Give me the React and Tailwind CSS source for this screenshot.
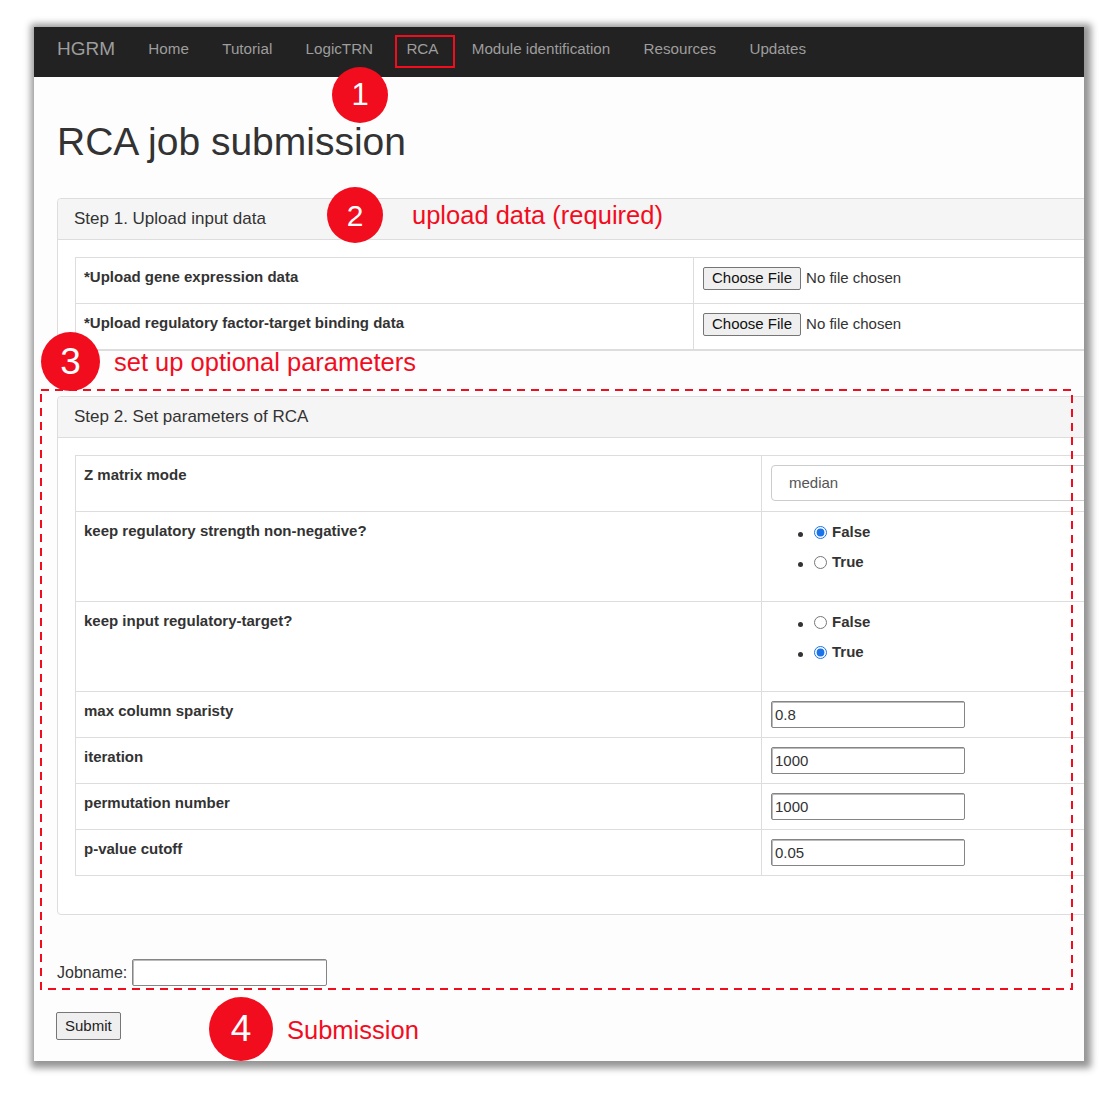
const RED = 'text-[#f20d1e]';

const NAV = ['Home', 'Tutorial', 'LogicTRN', 'RCA', 'Module identification', 'Resources', 'Updates'];

const FileCell = () => (
    <div className="flex items-center">
        <span className="flex h-[23px] items-center rounded-[2px] border border-[#767676] bg-[#efefef] px-[8px] text-[15px] text-[#111]">
            Choose File
        </span>
        <span className="ml-[5px] text-[15px] text-[#333]">No file chosen</span>
    </div>
);

const RadioList = ({ name, checked }) => (
    <ul className="list-disc pl-[43px] marker:text-[#333]">
        {['False', 'True'].map((v) => (
            <li key={v} className="h-[30px] leading-[26px]">
                <label className="inline-flex items-center font-bold text-[15px] text-[#333]">
                    <input
                        type="radio"
                        name={name}
                        defaultChecked={v === checked}
                        className="m-0 mr-[5px] h-[13px] w-[13px] accent-[#1a73e8]"
                    />
                    {v}
                </label>
            </li>
        ))}
    </ul>
);

const TextBox = ({ value, w = 'w-[194px]' }) => (
    <input
        type="text"
        defaultValue={value}
        className={`${w} h-[27px] rounded-[2px] border border-[#858585] bg-white px-[3px] text-[15px] text-[#333] shadow-[inset_1px_1px_0_#bbb] outline-none`}
    />
);

const Panel = ({ title, children, className = '' }) => (
    <div className={`w-[1400px] rounded-[4px] border border-[#ddd] bg-white ${className}`}>
        <div className="flex h-[41px] items-center rounded-t-[4px] border-b border-[#ddd] bg-[#f5f5f5] px-[16px] text-[17px] text-[#333]">
            {title}
        </div>
        {children}
    </div>
);

const Row = ({ label, h, labelW, children, cellClass = 'pt-[9px]' }) => (
    <tr className={h}>
        <td className={`${labelW} border border-[#ddd] px-[8px] pt-[8px] align-top text-[15px] font-bold leading-[21px] text-[#333]`}>
            {label}
        </td>
        <td className={`border border-[#ddd] px-[9px] align-top ${cellClass}`}>{children}</td>
    </tr>
);

const Circle = ({ n, className, size }) => (
    <div
        className={`absolute flex items-center justify-center rounded-full bg-[#f20d1e] text-white ${className} ${size}`}
    >
        {n}
    </div>
);

export default function App() {
    return (
        <div className="relative h-[1102px] w-[1120px] overflow-hidden bg-white pl-[34px] pt-[27px] font-['Liberation_Sans',Arial,sans-serif]">
            {/* screenshot frame */}
            <div className="relative h-[1034px] w-[1050px] overflow-hidden bg-[#fdfdfd] shadow-[2px_2px_7px_5px_rgba(0,0,0,0.42)]">
                <nav className="flex h-[50px] items-center gap-[33.3px] bg-[#222] pb-[6px] pl-[23px] text-[15.2px] text-[#9d9d9d]">
                    <span className="text-[19px]">HGRM</span>
                    {NAV.map((n) => (
                        <span key={n}>{n}</span>
                    ))}
                </nav>

                <div className="w-[1500px] pl-[23px]">
                    <h1 className="mt-[44px] text-[39px] leading-[42px] text-[#333]">RCA job submission</h1>

                    <Panel title="Step 1. Upload input data" className="mt-[35px]">
                        <div className="pl-[17px] pt-[17px]">
                            <table className="w-[1300px] table-fixed border-collapse">
                                <tbody>
                                    <Row label="*Upload gene expression data" h="h-[46px]" labelW="w-[618px]">
                                        <FileCell />
                                    </Row>
                                    <Row label="*Upload regulatory factor-target binding data" h="h-[46px]" labelW="w-[618px]">
                                        <FileCell />
                                    </Row>
                                </tbody>
                            </table>
                        </div>
                    </Panel>

                    <Panel title="Step 2. Set parameters of RCA" className="mt-[45px]">
                        <div className="pb-[38px] pl-[17px] pt-[17px]">
                            <table className="w-[1300px] table-fixed border-collapse">
                                <tbody>
                                    <Row label="Z matrix mode" h="h-[56px]" labelW="w-[686px]">
                                        <div className="flex h-[36px] w-[500px] items-center rounded-[4px] border border-[#ccc] bg-white pl-[17px] text-[15px] text-[#555]">
                                            median
                                        </div>
                                    </Row>
                                    <Row label="keep regulatory strength non-negative?" h="h-[90px]" labelW="w-[686px]" cellClass="pt-[7px]">
                                        <RadioList name="nonneg" checked="False" />
                                    </Row>
                                    <Row label="keep input regulatory-target?" h="h-[90px]" labelW="w-[686px]" cellClass="pt-[7px]">
                                        <RadioList name="keep" checked="True" />
                                    </Row>
                                    <Row label="max column sparisty" h="h-[46px]" labelW="w-[686px]">
                                        <TextBox value="0.8" />
                                    </Row>
                                    <Row label="iteration" h="h-[46px]" labelW="w-[686px]">
                                        <TextBox value="1000" />
                                    </Row>
                                    <Row label="permutation number" h="h-[46px]" labelW="w-[686px]">
                                        <TextBox value="1000" />
                                    </Row>
                                    <Row label="p-value cutoff" h="h-[46px]" labelW="w-[686px]">
                                        <TextBox value="0.05" />
                                    </Row>
                                </tbody>
                            </table>
                        </div>
                    </Panel>

                    <div className="mt-[44px] flex items-center gap-[5px] text-[16px] text-[#333]">
                        <span>Jobname:</span>
                        <TextBox value="" w="w-[195px]" />
                    </div>

                    <button className="-ml-[1px] mt-[26px] h-[28px] rounded-[2px] border border-[#767676] bg-[#efefef] px-[8px] text-[15px] text-[#222]">
                        Submit
                    </button>
                </div>
            </div>

            {/* annotations */}
            <div className="absolute left-[395px] top-[35px] h-[33px] w-[60px] border-2 border-[#f20d1e]" />

            <svg className="absolute left-[40px] top-[389px]" width="1034" height="602">
                <rect x="1" y="1" width="1031" height="599" fill="none" stroke="#f20d1e" strokeWidth="2" strokeDasharray="8 6" />
            </svg>

            <Circle n="1" className="left-[332px] top-[67px] text-[31px]" size="h-[56px] w-[56px]" />
            <Circle n="2" className="left-[327px] top-[187px] text-[30px]" size="h-[56px] w-[56px]" />
            <Circle n="3" className="left-[41px] top-[332px] text-[37px]" size="h-[59px] w-[59px]" />
            <Circle n="4" className="left-[209px] top-[997px] text-[37px]" size="h-[64px] w-[64px]" />

            <div className={`absolute left-[412px] top-[199px] text-[25.5px] leading-[32px] ${RED}`}>upload data (required)</div>
            <div className={`absolute left-[114px] top-[346px] text-[25.5px] leading-[32px] ${RED}`}>set up optional parameters</div>
            <div className={`absolute left-[287px] top-[1014px] text-[25.5px] leading-[32px] ${RED}`}>Submission</div>
        </div>
    );
}
